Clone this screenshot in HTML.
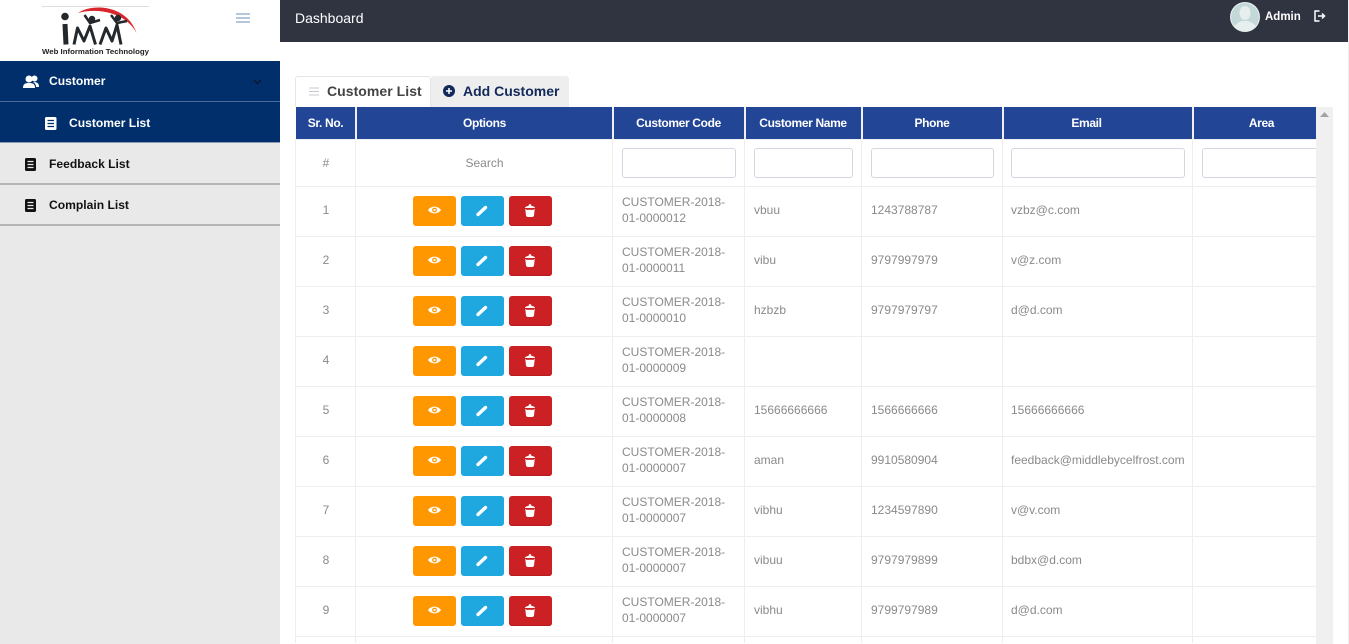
<!DOCTYPE html>
<html><head><meta charset="utf-8"><title>Dashboard</title>
<style>
*{box-sizing:border-box}
html,body{margin:0;padding:0;width:1349px;height:644px;overflow:hidden;background:#fff;font-family:"Liberation Sans",sans-serif}
.abs{position:absolute}
#side{left:0;top:0;width:280px;height:644px;background:#e9e9e9}
#logo{left:0;top:0;width:280px;height:61px;background:#fff}
.mi{position:absolute;left:0;width:280px;font-size:12.1px;font-weight:bold;color:#111}
.mi svg{position:absolute}
.mi span{position:absolute;top:0;white-space:nowrap}
#top{left:280px;top:0;width:1068px;height:42px;background:#2f3440;color:#fff}
#tw{left:295px;top:107px;width:1021px;height:537px;overflow:hidden}
table{border-collapse:collapse;table-layout:fixed;width:1034px;font-size:12px;color:#8a8a8a}
td,th{padding:0 8px 0 9px;vertical-align:middle;border:1px solid #eee}
td.m{padding-left:8px;padding-right:7px}
th{background:#224596;color:#fff;height:32px;font-weight:bold;text-align:center;border:0;border-left:2px solid #eef;border-right:0;letter-spacing:-.35px;white-space:nowrap;padding:0}
th:first-child{border-left:0;padding-left:1px}
th:nth-child(2){padding-left:1px}
tr.f td{height:47px}
tr.r td{height:50px;line-height:16px;padding-bottom:2px}
tr.l td{height:7px;border-bottom:0}
td:first-child{border-left:1px solid #eee;text-align:center;padding:0 0 0 1px}
tr.r td:first-child{padding-bottom:2px}
td.c{text-align:center;padding:0 0 0 1px}
tr.r td.c{text-align:left;padding:0 0 0 57px;font-size:0;line-height:0}
tr.f input{display:block;width:100%;height:30px;border:1px solid #d3d7e0;border-radius:3px;background:#fff}
.b{display:inline-block;width:43px;height:30px;border-radius:3px;margin:0 5px 0 0;vertical-align:top;position:relative}
.b svg{position:absolute;left:15px;top:8px}
.o{background:#ff9800}.e{background:#1fa8e0}.d{background:#cb2124;box-shadow:inset 0 -1px 0 #b81a1d}
</style></head>
<body>
<svg width="0" height="0" style="position:absolute">
  <symbol id="ie" viewBox="0 0 13 14"><path d="M0 6c3-4.500 10-4.500 13 0-3 4.500-10 4.500-13 0z" fill="#fff"/><circle cx="6.500" cy="6" r="2.400" fill="#ff9800"/><circle cx="6.500" cy="6" r="1.100" fill="#fff"/></symbol>
  <symbol id="ip" viewBox="0 0 13 14"><path d="M2 10.500L9.500 3.500" stroke="#fff" stroke-width="3.400" stroke-linecap="round" fill="none"/><path d="M1 12l.5-3 2 2z" fill="#fff"/></symbol>
  <symbol id="it" viewBox="0 0 13 14"><path d="M1 4c0-1.500 2.500-2 3.500-2C4.500 .8 5.500 0 6 0s1.500.8 1.500 2c1 0 3.500.5 3.500 2z" fill="#fff"/><path d="M1.300 5h9.400L10 11.500c-.2 1-1 1.500-2 1.500H4c-1 0-1.800-.5-2-1.500z" fill="#fff"/><path d="M2 5.600h8" stroke="#cb2124" stroke-width=".8"/></symbol>
</svg>
<div class="abs" id="side">
  <div class="abs" id="logo">
    <svg width="280" height="61" style="position:absolute;left:0;top:0">
      <rect x="42" y="6" width="107" height="1" fill="#ddd"/>
      <path d="M78 13C90 4 126 3 136.500 33C127 14 100 7 78 13Z" fill="#d8262c"/>
      <circle cx="65" cy="16.500" r="3.800" fill="#23282c"/>
      <g fill="none" stroke="#23282c" stroke-linejoin="round">
        <path d="M65 24L66 44.500" stroke-width="5"/>
        <path d="M74 44.500L77.500 28L84 41L90 26L95.500 44.500" stroke-width="3"/>
        <path d="M84.500 15L90 23L100 20" stroke-width="2.500"/>
        <path d="M100 44.500L106 28L112 41L117 25L121 44.500" stroke-width="3"/>
        <path d="M111 15L117 23L127 21" stroke-width="2.500"/>
      </g>
      <circle cx="92" cy="19" r="3.200" fill="#23282c"/>
      <circle cx="118" cy="18" r="3.200" fill="#23282c"/>
      <text x="42" y="54" font-family="Liberation Sans" font-size="7.500" font-weight="bold" fill="#222" textLength="107" lengthAdjust="spacingAndGlyphs">Web Information Technology</text>
      <g fill="#b5c7d8"><rect x="236" y="13" width="14" height="2"/><rect x="236" y="17" width="14" height="2"/><rect x="236" y="21" width="14" height="2"/></g>
    </svg>
  </div>
  <div class="mi" style="top:61px;height:41px;line-height:41px;background:#002f6c;color:#fff;border-bottom:1px solid #4a6a9a">
    <svg style="left:23px;top:14px" width="16" height="14" viewBox="0 0 16 14" fill="#fff"><circle cx="6" cy="4" r="3.500"/><path d="M0 13c0-4 2-5 6-5s6 1 6 5z"/><circle cx="11.500" cy="3.500" r="3"/><path d="M10 7c4 0 6 1 6 5h-3c0-2-1-4-3-5z"/></svg>
    <span style="left:49px">Customer</span>
    <svg style="left:253px;top:18px" width="9" height="6" viewBox="0 0 9 6"><path d="M1 1l3.500 3.500L8 1" fill="none" stroke="#0c1830" stroke-width="1.500"/></svg>
  </div>
  <div class="mi" style="top:102px;height:41px;line-height:42px;background:#002f6c;color:#fff;border-bottom:1px solid #8a9bb5">
    <svg style="left:45px;top:15px" width="12" height="13" viewBox="0 0 12 13"><rect width="11.500" height="13" rx="1.500" fill="#fff"/><path d="M2.500 3.500h6.500M2.500 6.500h6.500M2.500 9.500h6.500" stroke="#002f6c" stroke-width="1.200"/></svg>
    <span style="left:69px">Customer List</span>
  </div>
  <div class="mi" style="top:143px;height:42px;line-height:42px;border-bottom:2px solid #b5b5b5">
    <svg style="left:25px;top:15px" width="11" height="13" viewBox="0 0 11 13"><rect width="11" height="13" rx="1.500" fill="#111"/><path d="M2.500 3.500h6M2.500 6.500h6M2.500 9.500h6" stroke="#e9e9e9" stroke-width="1.200"/></svg>
    <span style="left:49px">Feedback List</span>
  </div>
  <div class="mi" style="top:185px;height:41px;line-height:40px;border-bottom:2px solid #b5b5b5">
    <svg style="left:25px;top:14px" width="11" height="13" viewBox="0 0 11 13"><rect width="11" height="13" rx="1.500" fill="#111"/><path d="M2.500 3.500h6M2.500 6.500h6M2.500 9.500h6" stroke="#e9e9e9" stroke-width="1.200"/></svg>
    <span style="left:49px">Complain List</span>
  </div>
</div>

<div class="abs" id="top">
  <div class="abs" style="left:15px;top:0;font-size:14px;line-height:37px">Dashboard</div>
  <svg class="abs" style="left:950px;top:2px" width="30" height="30" viewBox="0 0 30 30"><defs><clipPath id="cp"><circle cx="15" cy="15" r="14"/></clipPath></defs><circle cx="15" cy="15" r="15" fill="#e8eeee"/><g clip-path="url(#cp)"><circle cx="15" cy="15" r="14" fill="#c3d8d8"/><ellipse cx="15" cy="11" rx="5.500" ry="7" fill="#e6eeee"/><path d="M3 30c0-8 6-10 9-11h6c3 1 9 3 9 11z" fill="#e6eeee"/></g></svg>
  <div class="abs" style="left:985px;top:0;font-size:11.500px;font-weight:bold;line-height:34px">Admin</div>
  <svg class="abs" style="left:1034px;top:10px" width="12" height="12" viewBox="0 0 12 12" fill="none" stroke="#fff" stroke-width="1.500"><path d="M5.500 1H1v10h4.500"/><path d="M4 6h6.500M8 3.500L10.500 6 8 8.500"/></svg>
</div>

<div class="abs" style="left:295px;top:76px;width:136px;height:31px;background:#fff;border:1px solid #e6e6e6;border-bottom:0;border-radius:3px 3px 0 0;font-size:14px;font-weight:bold;line-height:29px;color:#444;letter-spacing:.05px">
  <svg class="abs" style="left:13px;top:10px" width="10" height="9"><path d="M0 1h10M0 4.500h10M0 8h10" stroke="#c5c9cf" stroke-width="1"/></svg>
  <span class="abs" style="left:31px;white-space:nowrap">Customer List</span>
</div>
<div class="abs" style="left:431px;top:76px;width:138px;height:31px;background:#eee;border-radius:3px 3px 0 0;font-size:14px;font-weight:bold;line-height:30px;color:#12295a;letter-spacing:0">
  <svg class="abs" style="left:12px;top:9px" width="12" height="12" viewBox="0 0 12 12"><circle cx="6" cy="6" r="6" fill="#12295a"/><path d="M6 3v6M3 6h6" stroke="#fff" stroke-width="1.500"/></svg>
  <span class="abs" style="left:32px;white-space:nowrap">Add Customer</span>
</div>

<div class="abs" id="tw">
<table>
<colgroup><col style="width:60px"><col style="width:257px"><col style="width:132px"><col style="width:117px"><col style="width:141px"><col style="width:190px"><col style="width:137px"></colgroup>
<tr><th>Sr. No.</th><th>Options</th><th>Customer Code</th><th>Customer Name</th><th>Phone</th><th style="padding-right:22px">Email</th><th>Area</th></tr>
<tr class="f"><td>#</td><td class="c">Search</td><td><input></td><td><input></td><td><input></td><td class="m"><input></td><td><input></td></tr>
<tr class="r"><td>1</td><td class="c"><i class="b o"><svg width="13" height="14"><use href="#ie"/></svg></i><i class="b e"><svg width="13" height="14"><use href="#ip"/></svg></i><i class="b d"><svg width="13" height="14"><use href="#it"/></svg></i></td><td>CUSTOMER-2018-<br>01-0000012</td><td>vbuu</td><td>1243788787</td><td class="m">vzbz@c.com</td><td></td></tr>
<tr class="r"><td>2</td><td class="c"><i class="b o"><svg width="13" height="14"><use href="#ie"/></svg></i><i class="b e"><svg width="13" height="14"><use href="#ip"/></svg></i><i class="b d"><svg width="13" height="14"><use href="#it"/></svg></i></td><td>CUSTOMER-2018-<br>01-0000011</td><td>vibu</td><td>9797997979</td><td class="m">v@z.com</td><td></td></tr>
<tr class="r"><td>3</td><td class="c"><i class="b o"><svg width="13" height="14"><use href="#ie"/></svg></i><i class="b e"><svg width="13" height="14"><use href="#ip"/></svg></i><i class="b d"><svg width="13" height="14"><use href="#it"/></svg></i></td><td>CUSTOMER-2018-<br>01-0000010</td><td>hzbzb</td><td>9797979797</td><td class="m">d@d.com</td><td></td></tr>
<tr class="r"><td>4</td><td class="c"><i class="b o"><svg width="13" height="14"><use href="#ie"/></svg></i><i class="b e"><svg width="13" height="14"><use href="#ip"/></svg></i><i class="b d"><svg width="13" height="14"><use href="#it"/></svg></i></td><td>CUSTOMER-2018-<br>01-0000009</td><td></td><td></td><td class="m"></td><td></td></tr>
<tr class="r"><td>5</td><td class="c"><i class="b o"><svg width="13" height="14"><use href="#ie"/></svg></i><i class="b e"><svg width="13" height="14"><use href="#ip"/></svg></i><i class="b d"><svg width="13" height="14"><use href="#it"/></svg></i></td><td>CUSTOMER-2018-<br>01-0000008</td><td>15666666666</td><td>1566666666</td><td class="m">15666666666</td><td></td></tr>
<tr class="r"><td>6</td><td class="c"><i class="b o"><svg width="13" height="14"><use href="#ie"/></svg></i><i class="b e"><svg width="13" height="14"><use href="#ip"/></svg></i><i class="b d"><svg width="13" height="14"><use href="#it"/></svg></i></td><td>CUSTOMER-2018-<br>01-0000007</td><td>aman</td><td>9910580904</td><td class="m">feedback@middlebycelfrost.com</td><td></td></tr>
<tr class="r"><td>7</td><td class="c"><i class="b o"><svg width="13" height="14"><use href="#ie"/></svg></i><i class="b e"><svg width="13" height="14"><use href="#ip"/></svg></i><i class="b d"><svg width="13" height="14"><use href="#it"/></svg></i></td><td>CUSTOMER-2018-<br>01-0000007</td><td>vibhu</td><td>1234597890</td><td class="m">v@v.com</td><td></td></tr>
<tr class="r"><td>8</td><td class="c"><i class="b o"><svg width="13" height="14"><use href="#ie"/></svg></i><i class="b e"><svg width="13" height="14"><use href="#ip"/></svg></i><i class="b d"><svg width="13" height="14"><use href="#it"/></svg></i></td><td>CUSTOMER-2018-<br>01-0000007</td><td>vibuu</td><td>9797979899</td><td class="m">bdbx@d.com</td><td></td></tr>
<tr class="r"><td>9</td><td class="c"><i class="b o"><svg width="13" height="14"><use href="#ie"/></svg></i><i class="b e"><svg width="13" height="14"><use href="#ip"/></svg></i><i class="b d"><svg width="13" height="14"><use href="#it"/></svg></i></td><td>CUSTOMER-2018-<br>01-0000007</td><td>vibhu</td><td>9799797989</td><td class="m">d@d.com</td><td></td></tr>
<tr class="l"><td></td><td></td><td></td><td></td><td></td><td></td><td></td></tr>
</table>
</div>
<div class="abs" style="left:1316px;top:107px;width:17px;height:537px;background:#f0f0f0">
  <svg class="abs" style="left:4px;top:5px" width="9" height="5"><path d="M0 5L4.500 0 9 5z" fill="#a3a3a3"/></svg>
</div>
<div class="abs" style="left:1348px;top:0;width:1px;height:644px;background:#eee"></div>
</body></html>
